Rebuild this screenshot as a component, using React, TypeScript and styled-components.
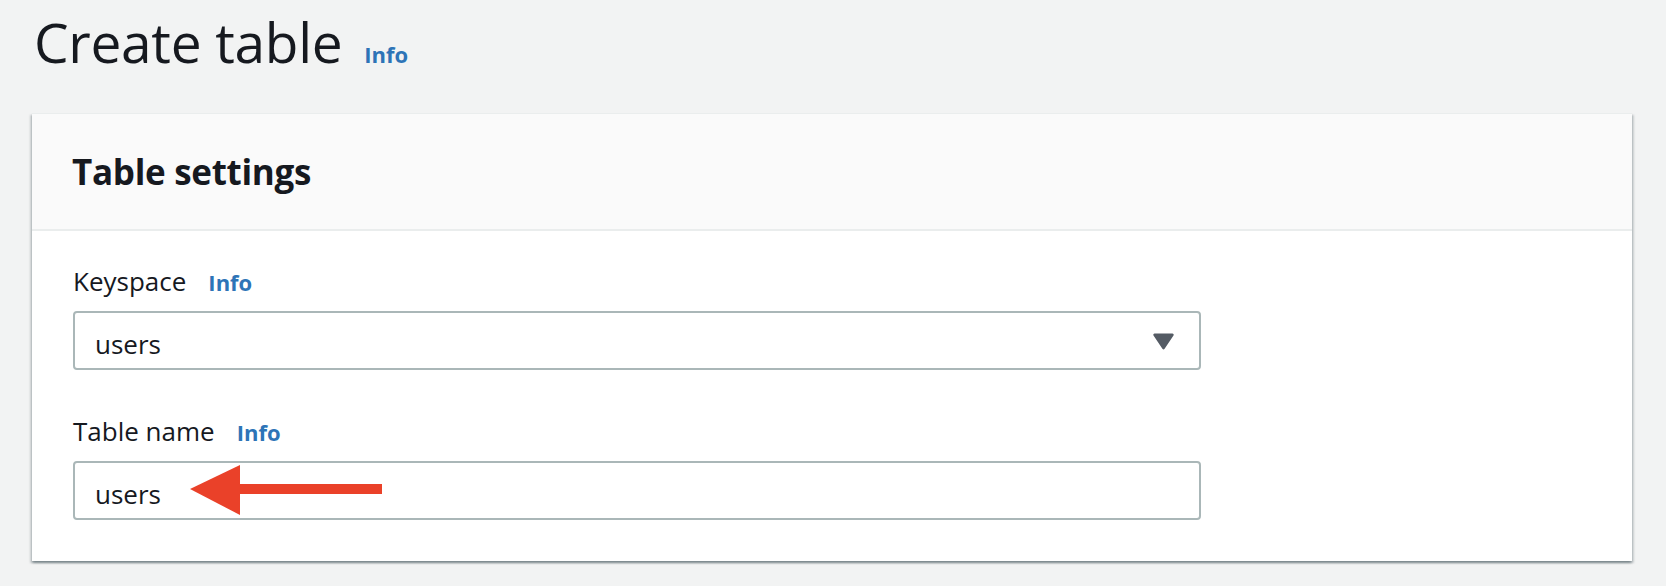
import React from 'react';
import styled, { createGlobalStyle } from 'styled-components';

const GlobalStyle = createGlobalStyle`
  html, body {
    margin: 0;
    padding: 0;
    background: #f2f3f3;
  }

  body {
    font-family: 'Open Sans', 'Noto Sans', sans-serif;
    color: #16191f;
  }
`;

const FIELDS = [
  { label: 'Keyspace', value: 'users', kind: 'select' },
  { label: 'Table name', value: 'users', kind: 'input' },
];

export default function App() {
  return (
    <Page>
      <GlobalStyle />
      <TitleRow>
        <Title>Create table</Title>
        <InfoLink>Info</InfoLink>
      </TitleRow>

      <Card>
        <CardHeader>
          <CardTitle>Table settings</CardTitle>
        </CardHeader>
        <CardBody>
          {FIELDS.map((field) => (
            <Field key={field.label}>
              <LabelRow>
                <Label>{field.label}</Label>
                <InfoLink>Info</InfoLink>
              </LabelRow>
              <Control>
                <ControlText>{field.value}</ControlText>
                {field.kind === 'select' ? (
                  <Caret viewBox="0 0 21 17" aria-hidden>
                    <path d="M1.6 0.5h17.8a1.3 1.3 0 0 1 1.1 2l-8.9 13.3a1.4 1.4 0 0 1-2.2 0L0.5 2.5a1.3 1.3 0 0 1 1.1-2z" fill="#545b64" />
                  </Caret>
                ) : (
                  <Arrow viewBox="0 0 320 59" aria-hidden>
                    <rect x="160" y="23" width="149" height="10" fill="#ea4129" />
                    <polygon points="117,28 167,4 167,54" fill="#ea4129" />
                  </Arrow>
                )}
              </Control>
            </Field>
          ))}
        </CardBody>
      </Card>
    </Page>
  );
}

const Page = styled.div`
  padding: 14px 34px 24px 32px;
`;

const TitleRow = styled.div`
  display: flex;
  align-items: baseline;
  padding-left: 2px;
  margin-bottom: 43px;
`;

const Title = styled.h1`
  margin: 0;
  font-size: 55px;
  line-height: 56px;
  font-weight: 400;
  letter-spacing: -0.3px;
`;

const InfoLink = styled.a`
  font-size: 22px;
  font-weight: 700;
  color: #2d74b7;
  margin-left: 22px;
  cursor: pointer;
`;

const Card = styled.section`
  background: #ffffff;
  box-shadow: 0 2px 2px rgba(0, 28, 36, 0.3), 2px 2px 2px rgba(0, 28, 36, 0.15),
    -2px 2px 2px rgba(0, 28, 36, 0.15);
  border-top: 1px solid #eaeded;
`;

const CardHeader = styled.header`
  height: 115px;
  display: flex;
  align-items: center;
  padding: 0 40px;
  background: #fafafa;
  border-bottom: 2px solid #eaeded;
`;

const CardTitle = styled.h2`
  margin: 0;
  font-size: 35px;
  font-weight: 700;
  letter-spacing: -0.3px;
`;

const CardBody = styled.div`
  display: flex;
  flex-direction: column;
  gap: 43px;
  padding: 32px 40px 41px 41px;
`;

const Field = styled.div`
  display: flex;
  flex-direction: column;
  gap: 12px;
  max-width: 1128px;
`;

const LabelRow = styled.div`
  display: flex;
  align-items: baseline;
  height: 36px;
  line-height: 36px;
`;

const Label = styled.span`
  font-size: 26px;
  font-weight: 400;
`;

const Control = styled.div`
  position: relative;
  display: flex;
  align-items: center;
  justify-content: space-between;
  height: 55px;
  padding: 0 25px 0 20px;
  border: 2px solid #aab7b8;
  border-radius: 4px;
  background: #ffffff;
`;

const ControlText = styled.span`
  font-size: 26px;
  line-height: 36px;
  padding-top: 6px;
`;

const Caret = styled.svg`
  width: 21px;
  height: 17px;
  margin-top: 2px;
`;

const Arrow = styled.svg`
  position: absolute;
  left: -2px;
  top: -2px;
  width: 320px;
  height: 59px;
`;
